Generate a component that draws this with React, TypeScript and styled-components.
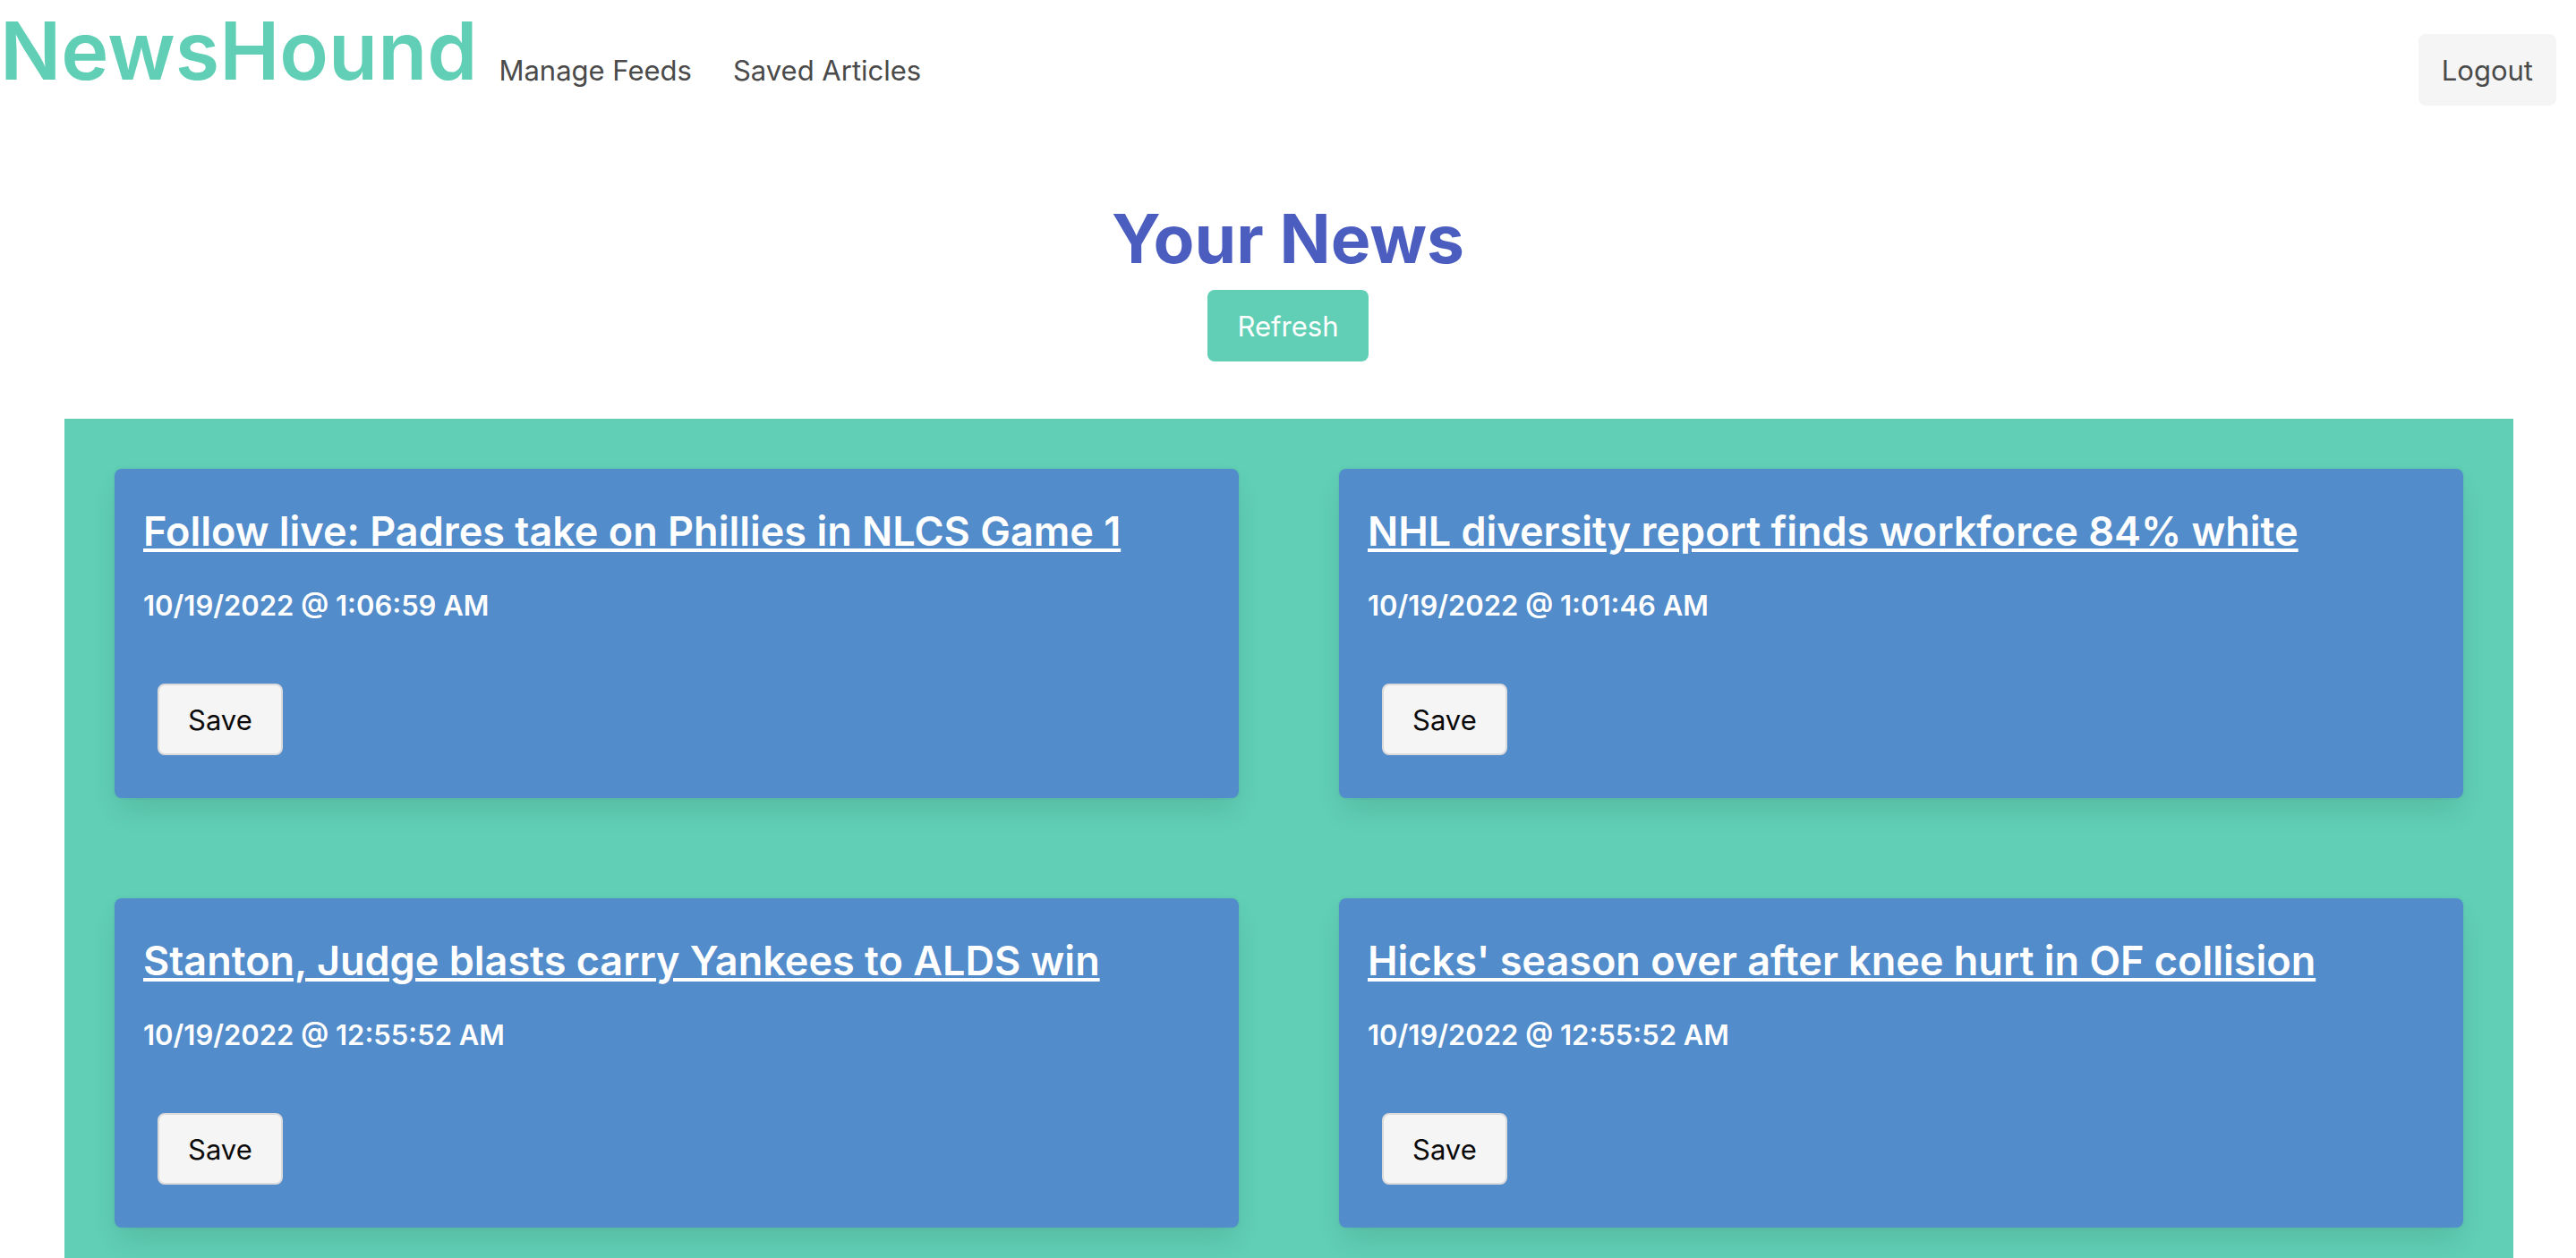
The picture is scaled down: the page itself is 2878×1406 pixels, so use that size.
import React from "react";
import styled, { createGlobalStyle } from "styled-components";

const GlobalStyle = createGlobalStyle`
  *, *::before, *::after { box-sizing: border-box; }
  html, body { margin: 0; background: #fff; }
  html { scrollbar-width: none; }
  body, button {
    font-family: Inter, "Liberation Sans", sans-serif;
    font-size: 31px;
    line-height: 48px;
  }
  h1, h2, p { margin: 0; }
  a { color: inherit; text-decoration: none; }
`;

const Navbar = styled.nav`
  display: flex;
  align-items: center;
  min-height: 156px;
  padding-right: 22px;
  color: #4a4a4a;
`;

const Brand = styled.a`
  align-self: flex-start;
  color: #60cfb5;
  font-size: 90px;
  font-weight: 600;
  line-height: 114px;
`;

const NavLinks = styled.div`
  display: flex;
  flex: 1;
  gap: 46px;
  padding: 2px 0 0 24px;
`;

const Button = styled.button<{ $tone?: "primary" | "light" }>`
  height: 80px;
  padding: 2px ${(p) => (p.$tone === "light" ? 24 : 32)}px 0;
  border: 2px solid ${(p) => (p.$tone ? "transparent" : "#dbdbdb")};
  border-radius: 8px;
  background: ${(p) => (p.$tone === "primary" ? "#60cfb5" : "#f5f5f5")};
  color: ${(p) =>
    p.$tone === "primary" ? "#fff" : p.$tone === "light" ? "#4a4a4a" : "#0a0a0a"};
  cursor: pointer;
`;

const Header = styled.header`
  display: flex;
  flex-direction: column;
  align-items: center;
  padding: 64px 0;
`;

const Title = styled.h1`
  padding-bottom: 10px;
  color: #4c5dc0;
  font-size: 75px;
  font-weight: 700;
  line-height: 94px;
`;

const Feed = styled.main`
  display: grid;
  grid-template-columns: 1fr 1fr;
  gap: 112px;
  margin: 0 70px 0 72px;
  padding: 56px;
  background: #60cfb5;
`;

const Card = styled.article`
  display: flex;
  flex-direction: column;
  align-items: flex-start;
  padding: 32px;
  border-radius: 8px;
  background: #538ccb;
  color: #fff;
  box-shadow: 0 16px 32px -4px rgba(10, 10, 10, 0.1), 0 0 0 2px rgba(10, 10, 10, 0.02);
`;

const Headline = styled.h2`
  font-size: 45px;
  font-weight: 600;
  line-height: 76px;
  a {
    text-decoration: underline;
    text-decoration-thickness: 4px;
    text-underline-offset: 3px;
  }
`;

const Published = styled.p`
  padding: 21px 0 47px;
  font-weight: 600;
`;

const Actions = styled.div`
  display: flex;
  padding: 16px;
`;

const articles = [
  ["Follow live: Padres take on Phillies in NLCS Game 1", "10/19/2022 @ 1:06:59 AM"],
  ["NHL diversity report finds workforce 84% white", "10/19/2022 @ 1:01:46 AM"],
  ["Stanton, Judge blasts carry Yankees to ALDS win", "10/19/2022 @ 12:55:52 AM"],
  ["Hicks' season over after knee hurt in OF collision", "10/19/2022 @ 12:55:52 AM"],
];

export default function App() {
  return (
    <>
      <GlobalStyle />
      <Navbar>
        <Brand href="#">NewsHound</Brand>
        <NavLinks>
          <a href="#feeds">Manage Feeds</a>
          <a href="#saved">Saved Articles</a>
        </NavLinks>
        <Button $tone="light">Logout</Button>
      </Navbar>
      <Header>
        <Title>Your News</Title>
        <Button $tone="primary">Refresh</Button>
      </Header>
      <Feed>
        {articles.map(([headline, published]) => (
          <Card key={headline}>
            <Headline>
              <a href="#article">{headline}</a>
            </Headline>
            <Published>{published}</Published>
            <Actions>
              <Button>Save</Button>
            </Actions>
          </Card>
        ))}
      </Feed>
    </>
  );
}
